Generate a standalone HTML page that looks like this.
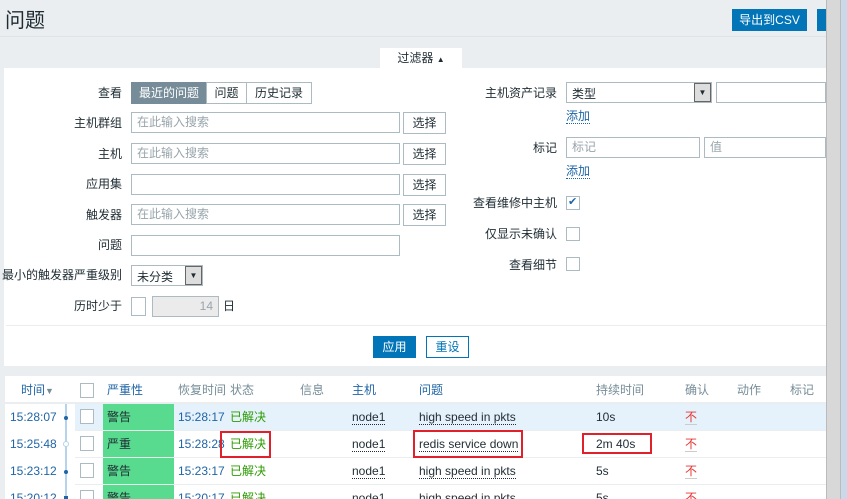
<!DOCTYPE html>
<html style="width:847px;height:499px;overflow:hidden"><head><meta charset="utf-8"><style>
*{margin:0;padding:0;box-sizing:border-box}
body{width:847px;height:499px;overflow:hidden;background:#ebeef0;font-family:"Liberation Sans","Noto Sans CJK SC",sans-serif;font-size:12px;line-height:14px;color:#1f2c33;position:relative}
.a{position:absolute;white-space:nowrap;line-height:14px}
.inp{position:absolute;height:21px;border:1px solid #acbbc2;background:#fff;color:#98a5ab;padding:2px 5px;font-size:12px;line-height:15px}
.btn{position:absolute;height:22px;border:1px solid #acbbc2;background:#fff;text-align:center;line-height:20px;font-size:12px}
.lbl{position:absolute;text-align:right;width:120px;white-space:nowrap;line-height:14px}
.cb{position:absolute;width:14px;height:14px;border:1px solid #acbbc2;background:#fff}
.row{position:absolute;left:75px;width:751px;height:27px;border-bottom:1px solid #ebeef0}
.t{color:#1f65a6}
.u{border-bottom:1px dotted #1f2c33}
.red{position:absolute;border:2px solid #e0202a}
</style></head><body>
<div class="a" style="left:5px;top:10px;font-size:20px;line-height:22px;color:#1f2c33">问题</div>
<div class="a" style="left:0;top:36px;width:826px;height:1px;background:#dde3e6"></div>
<div class="a" style="left:732px;top:9px;width:75px;height:22px;background:#0275b8;color:#fff;text-align:center;line-height:22px">导出到CSV</div>
<div class="a" style="left:817px;top:9px;width:10px;height:22px;background:#0275b8"></div>

<div class="a" style="left:380px;top:48px;width:82px;height:21px;background:#fff;text-align:center;line-height:21px">过滤器 <span style="font-size:8px">▲</span></div>
<div class="a" style="left:4px;top:68px;width:822px;height:298px;background:#fff"></div>
<div class="a" style="left:6px;top:325px;width:820px;height:1px;background:#ebeef0"></div>

<div class="lbl" style="left:2px;top:86px">查看</div>
<div class="a" style="left:131px;top:82px;width:76px;height:22px;background:#768d99;color:#fff;text-align:center;line-height:22px">最近的问题</div>
<div class="btn" style="left:206px;top:82px;width:41px">问题</div>
<div class="btn" style="left:246px;top:82px;width:66px">历史记录</div>

<div class="lbl" style="left:2px;top:116px">主机群组</div>
<div class="inp" style="left:131px;top:112px;width:269px">在此输入搜索</div>
<div class="btn" style="left:403px;top:112px;width:43px">选择</div>
<div class="lbl" style="left:2px;top:147px">主机</div>
<div class="inp" style="left:131px;top:143px;width:269px">在此输入搜索</div>
<div class="btn" style="left:403px;top:143px;width:43px">选择</div>
<div class="lbl" style="left:2px;top:177px">应用集</div>
<div class="inp" style="left:131px;top:174px;width:269px"></div>
<div class="btn" style="left:403px;top:174px;width:43px">选择</div>
<div class="lbl" style="left:2px;top:208px">触发器</div>
<div class="inp" style="left:131px;top:204px;width:269px">在此输入搜索</div>
<div class="btn" style="left:403px;top:204px;width:43px">选择</div>
<div class="lbl" style="left:2px;top:238px">问题</div>
<div class="inp" style="left:131px;top:235px;width:269px"></div>
<div class="lbl" style="left:2px;top:268px">最小的触发器严重级别</div>
<div class="inp" style="left:131px;top:265px;width:72px;color:#1f2c33;padding-top:4px">未分类</div>
<div class="a" style="left:185px;top:266px;width:17px;height:19px;background:#ddd;border:1px solid #666;font-size:8px;text-align:center;line-height:18px">▼</div>
<div class="lbl" style="left:2px;top:299px">历时少于</div>
<div class="cb" style="left:131px;top:297px;width:15px;height:19px"></div>
<div class="inp" style="left:152px;top:296px;width:67px;background:#ebebeb;text-align:right;color:#98a5ab">14</div>
<div class="a" style="left:223px;top:299px">日</div>

<div class="a" style="left:373px;top:336px;width:43px;height:22px;background:#0275b8;color:#fff;text-align:center;line-height:22px">应用</div>
<div class="btn" style="left:426px;top:336px;width:43px;border-color:#0275b8;color:#0275b8">重设</div>

<div class="lbl" style="left:437px;top:86px">主机资产记录</div>
<div class="inp" style="left:566px;top:82px;width:146px;color:#1f2c33;padding-top:4px">类型</div>
<div class="a" style="left:694px;top:83px;width:17px;height:19px;background:#ddd;border:1px solid #666;font-size:8px;text-align:center;line-height:18px">▼</div>
<div class="inp" style="left:716px;top:82px;width:110px"></div>
<div class="a t" style="left:566px;top:109px;border-bottom:1px dotted #1f65a6">添加</div>
<div class="lbl" style="left:437px;top:141px">标记</div>
<div class="inp" style="left:566px;top:137px;width:134px">标记</div>
<div class="inp" style="left:704px;top:137px;width:122px">值</div>
<div class="a t" style="left:566px;top:164px;border-bottom:1px dotted #1f65a6">添加</div>
<div class="lbl" style="left:437px;top:196px">查看维修中主机</div>
<div class="cb" style="left:566px;top:196px"><span style="position:absolute;left:1px;top:-1px;color:#1f65a6;font-size:11px;line-height:12px">✔</span></div>
<div class="lbl" style="left:437px;top:227px">仅显示未确认</div>
<div class="cb" style="left:566px;top:227px"></div>
<div class="lbl" style="left:437px;top:258px">查看细节</div>
<div class="cb" style="left:566px;top:257px"></div>

<div class="a" style="left:5px;top:376px;width:821px;height:123px;background:#fff"></div>
<div class="a" style="left:5px;top:402px;width:821px;height:2px;background:#ebeef0"></div>
<div class="a t" style="left:21px;top:383px">时间<span style="font-size:9px;color:#768d99">▼</span></div>
<div class="cb" style="left:80px;top:383px;width:14px;height:15px"></div>
<div class="a t" style="left:107px;top:383px">严重性</div>
<div class="a" style="left:178px;top:383px;color:#768d99">恢复时间</div>
<div class="a" style="left:230px;top:383px;color:#768d99">状态</div>
<div class="a" style="left:300px;top:383px;color:#768d99">信息</div>
<div class="a t" style="left:352px;top:383px">主机</div>
<div class="a t" style="left:419px;top:383px">问题</div>
<div class="a" style="left:596px;top:383px;color:#768d99">持续时间</div>
<div class="a" style="left:685px;top:383px;color:#768d99">确认</div>
<div class="a" style="left:737px;top:383px;color:#768d99">动作</div>
<div class="a" style="left:790px;top:383px;color:#768d99">标记</div>

<div class="a" style="left:65px;top:404px;width:2px;height:95px;background:#b5d3ec"></div>

<div class="row" style="top:404px;background:#e5f1fb"></div>
<div class="row" style="top:431px"></div>
<div class="row" style="top:458px"></div>
<div class="row" style="top:485px;height:14px;border:0"></div>

<div class="a" style="left:103px;top:404px;width:71px;height:95px;background:#59db8f"></div>
<div class="a" style="left:103px;top:430px;width:71px;height:1px;background:#e8f5ec"></div>
<div class="a" style="left:103px;top:457px;width:71px;height:1px;background:#e8f5ec"></div>
<div class="a" style="left:103px;top:484px;width:71px;height:1px;background:#e8f5ec"></div>

<div class="a t" style="left:10px;top:410px">15:28:07</div>
<div class="a t" style="left:10px;top:437px">15:25:48</div>
<div class="a t" style="left:10px;top:464px">15:23:12</div>
<div class="a t" style="left:10px;top:491px">15:20:12</div>
<div class="a" style="left:64px;top:416px;width:4px;height:4px;background:#1f65a6;border-radius:2px"></div>
<div class="a" style="left:63px;top:441px;width:6px;height:6px;border:1px solid #b5d3ec;background:#fff;border-radius:3px"></div>
<div class="a" style="left:64px;top:470px;width:4px;height:4px;background:#1f65a6;border-radius:2px"></div>
<div class="a" style="left:64px;top:496px;width:4px;height:3px;background:#1f65a6"></div>

<div class="cb" style="left:80px;top:409px;width:14px;height:15px"></div>
<div class="cb" style="left:80px;top:436px;width:14px;height:15px"></div>
<div class="cb" style="left:80px;top:463px;width:14px;height:15px"></div>
<div class="cb" style="left:80px;top:490px;width:14px;height:9px;border-bottom:0"></div>

<div class="a" style="left:107px;top:410px">警告</div>
<div class="a" style="left:107px;top:437px">严重</div>
<div class="a" style="left:107px;top:464px">警告</div>
<div class="a" style="left:107px;top:491px">警告</div>

<div class="a t" style="left:178px;top:410px">15:28:17</div>
<div class="a t" style="left:178px;top:437px">15:28:28</div>
<div class="a t" style="left:178px;top:464px">15:23:17</div>
<div class="a t" style="left:178px;top:491px">15:20:17</div>

<div class="a" style="left:230px;top:410px;color:#2b9a00">已解决</div>
<div class="a" style="left:230px;top:437px;color:#2b9a00">已解决</div>
<div class="a" style="left:230px;top:464px;color:#2b9a00">已解决</div>
<div class="a" style="left:230px;top:491px;color:#2b9a00">已解决</div>

<div class="a u" style="left:352px;top:410px">node1</div>
<div class="a u" style="left:352px;top:437px">node1</div>
<div class="a u" style="left:352px;top:464px">node1</div>
<div class="a u" style="left:352px;top:491px">node1</div>

<div class="a u" style="left:419px;top:410px">high speed in pkts</div>
<div class="a u" style="left:419px;top:437px">redis service down</div>
<div class="a u" style="left:419px;top:464px">high speed in pkts</div>
<div class="a u" style="left:419px;top:491px">high speed in pkts</div>

<div class="a" style="left:596px;top:410px">10s</div>
<div class="a" style="left:596px;top:437px">2m 40s</div>
<div class="a" style="left:596px;top:464px">5s</div>
<div class="a" style="left:596px;top:491px">5s</div>

<div class="a" style="left:685px;top:410px;color:#e33734;border-bottom:1px solid #ccc">不</div>
<div class="a" style="left:685px;top:437px;color:#e33734;border-bottom:1px solid #ccc">不</div>
<div class="a" style="left:685px;top:464px;color:#e33734;border-bottom:1px solid #ccc">不</div>
<div class="a" style="left:685px;top:491px;color:#e33734">不</div>

<div class="red" style="left:220px;top:431px;width:51px;height:27px"></div>
<div class="red" style="left:413px;top:430px;width:110px;height:28px"></div>
<div class="red" style="left:582px;top:433px;width:70px;height:21px"></div>

<div class="a" style="left:826px;top:0;width:15px;height:499px;background:#d8d8d8;border-left:1px solid #bbb;border-right:1px solid #bbb"></div>
<div class="a" style="left:841px;top:0;width:6px;height:499px;background:#c9d9ea"></div>
</body></html>
